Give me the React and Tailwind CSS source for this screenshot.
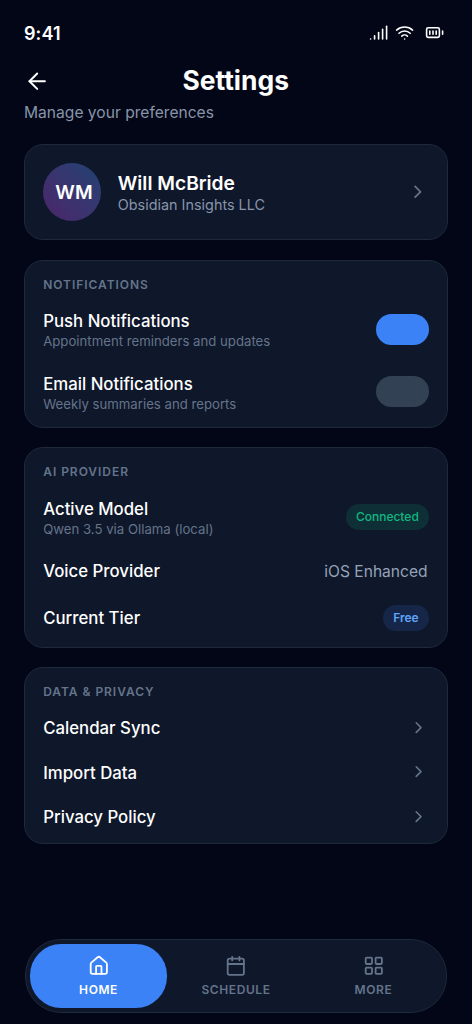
import { ArrowLeft, BatteryFull, Calendar, ChevronRight, House, LayoutGrid, Signal, Wifi } from 'lucide-react';
import clsx from 'clsx';

const dataLinks = ['Calendar Sync', 'Import Data', 'Privacy Policy'];

const tabs = [
  { label: 'HOME', icon: House, active: true },
  { label: 'SCHEDULE', icon: Calendar },
  { label: 'MORE', icon: LayoutGrid },
];

function Card({ className, children }) {
  return (
    <section className={clsx('rounded-[19px] border border-[#1e293b] bg-[#0f172a] px-[18.2px]', className)}>
      {children}
    </section>
  );
}

function SectionTitle({ children }) {
  return (
    <h2 className="pt-[16px] text-[12px] leading-[16px] font-semibold tracking-[0.96px] text-[#64748b]">{children}</h2>
  );
}

function RowText({ title, subtitle }) {
  return (
    <div className={clsx(subtitle && 'pt-[2px]')}>
      <div className="text-[16.8px] leading-[20px] font-medium">{title}</div>
      {subtitle && <div className="mt-[2px] text-[13.2px] leading-[17px] text-[#64748b]">{subtitle}</div>}
    </div>
  );
}

function Toggle({ on }) {
  return (
    <button
      type="button"
      role="switch"
      aria-checked={on}
      className={clsx('h-[31.2px] w-[52.8px] rounded-[15.6px]', on ? 'bg-[#3b82f6]' : 'bg-[#334155]')}
    />
  );
}

export default function App() {
  return (
    <div className="flex h-[1024px] w-[472px] flex-col bg-[#020617] px-6 font-['Inter',sans-serif] text-white">
      <div className="flex h-[65px] items-center justify-between pr-[4px]">
        <span className="pt-[2px] text-[18px] font-semibold tracking-[0.1px]">9:41</span>
        <div className="flex items-center">
          <Signal size={19.2} />
          <Wifi size={19.2} className="ml-[7px]" />
          <BatteryFull size={19.2} className="ml-[10.4px]" />
        </div>
      </div>

      <header className="flex h-[32px] items-center justify-between">
        <ArrowLeft size={26.4} strokeWidth={1.8} />
        <h1 className="-mt-[2px] mr-[0.6px] text-[26.4px] leading-[32px] font-bold">Settings</h1>
        <div className="w-[26.4px]" />
      </header>
      <p className="mt-[6px] text-[15.6px] leading-[20px] text-[#8795aa]">Manage your preferences</p>

      <Card className="mt-[21.2px] flex h-[96px] items-center">
        <div className="flex h-[57.6px] w-[57.6px] items-center justify-center rounded-full bg-linear-45 from-[#4a2469] to-[#1b4274] pl-[4px] text-[19.2px] font-semibold">
          WM
        </div>
        <div className="ml-[17px] flex-1 pt-[2px]">
          <div className="text-[19.2px] leading-[23px] font-semibold">Will McBride</div>
          <div className="text-[14.4px] leading-[20px] text-[#8795aa]">Obsidian Insights LLC</div>
        </div>
        <ChevronRight size={21.6} className="text-[#64748b]" />
      </Card>

      <Card className="mt-[19.6px] h-[168px]">
        <SectionTitle>NOTIFICATIONS</SectionTitle>
        <div className="mt-[5.1px] flex h-[62.6px] items-center justify-between">
          <RowText title="Push Notifications" subtitle="Appointment reminders and updates" />
          <Toggle on />
        </div>
        <div className="flex h-[62.6px] items-center justify-between">
          <div className="pt-[1px]">
            <RowText title="Email Notifications" subtitle="Weekly summaries and reports" />
          </div>
          <Toggle on={false} />
        </div>
      </Card>

      <Card className="mt-[19px] h-[201px]">
        <SectionTitle>AI PROVIDER</SectionTitle>
        <div className="mt-[6px] flex h-[62px] items-center justify-between">
          <div className="pt-[1px]">
            <RowText title="Active Model" subtitle="Qwen 3.5 via Ollama (local)" />
          </div>
          <span className="rounded-full bg-[#10b981]/15 px-[10px] py-[5px] text-[12px] leading-[16.4px] font-medium text-[#10b981]">
            Connected
          </span>
        </div>
        <div className="flex h-[47px] items-center justify-between">
          <RowText title="Voice Provider" />
          <span className="pr-[1.2px] text-[15.6px] text-[#94a3b8]">iOS Enhanced</span>
        </div>
        <div className="flex h-[47px] items-center justify-between">
          <RowText title="Current Tier" />
          <span className="rounded-full bg-[#3b82f6]/15 px-[10.2px] py-[5px] text-[12px] leading-[16.4px] font-semibold text-[#60a5fa]">
            Free
          </span>
        </div>
      </Card>

      <Card className="mt-[19.2px] h-[177px]">
        <SectionTitle>DATA &amp; PRIVACY</SectionTitle>
        <div className="mt-[6px]">
          {dataLinks.map((label) => (
            <div key={label} className="flex h-[44.4px] items-center justify-between">
              <RowText title={label} />
              <ChevronRight size={19.2} className="mr-[0.4px] mb-[1px] text-[#64748b]" />
            </div>
          ))}
        </div>
      </Card>

      <nav className="mx-[1px] mt-auto mb-[11px] flex h-[74px] rounded-[36px] border border-[#1e293b] bg-[#0f172a] p-[3.8px]">
        {tabs.map(({ label, icon: Icon, active }) => (
          <a
            key={label}
            className={clsx(
              'flex flex-1 flex-col items-center justify-center gap-[5px] rounded-[31.2px] text-[12px] leading-[15px] font-semibold tracking-[0.6px]',
              active ? 'bg-[#3b82f6] text-white' : 'text-[#64748b]'
            )}
          >
            <Icon size={21.6} />
            {label}
          </a>
        ))}
      </nav>
    </div>
  );
}
